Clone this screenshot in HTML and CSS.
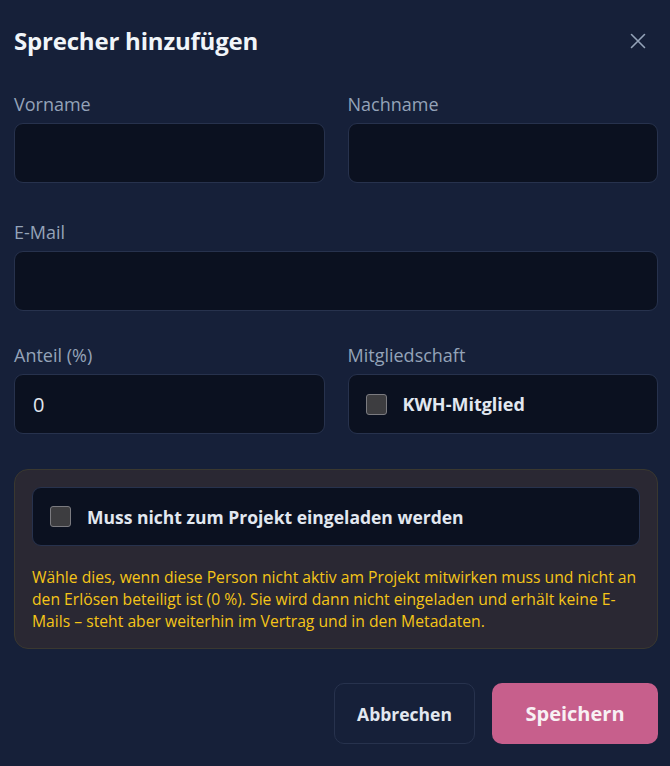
FILE: index.html
```html
<!DOCTYPE html>
<html lang="de">
<head>
    <meta charset="UTF-8">
    <meta name="viewport" content="width=device-width, initial-scale=1.0">
    <title>Sprecher hinzufügen</title>
    <link rel="stylesheet" href="styles.css">
</head>
<body>
  <div class="dialog">
    <div class="dialog-header">
      <h2>Sprecher hinzufügen</h2>
      <button type="button" class="close-btn" aria-label="Schließen">
        <svg width="16" height="16" viewBox="0 0 16 16"><path d="M1.5 1.5 L14.5 14.5 M14.5 1.5 L1.5 14.5" stroke="#94a3b8" stroke-width="1.6" fill="none" stroke-linecap="round"/></svg>
      </button>
    </div>

    <form id="speakerForm">
      <div class="row">
        <div class="field">
          <label for="firstName">Vorname</label>
          <input type="text" id="firstName" name="firstName">
        </div>
        <div class="field">
          <label for="lastName">Nachname</label>
          <input type="text" id="lastName" name="lastName">
        </div>
      </div>

      <div class="field field-email">
        <label for="email">E-Mail</label>
        <input type="email" id="email" name="email">
      </div>

      <div class="row">
        <div class="field">
          <label for="share">Anteil (%)</label>
          <input type="text" id="share" name="share" value="0">
        </div>
        <div class="field">
          <span class="label">Mitgliedschaft</span>
          <label class="check-box">
            <input type="checkbox" name="member">
            <span class="check-text">KWH-Mitglied</span>
          </label>
        </div>
      </div>

      <div class="notice">
        <label class="check-box">
          <input type="checkbox" name="noInvite">
          <span class="check-text">Muss nicht zum Projekt eingeladen werden</span>
        </label>
        <p>Wähle dies, wenn diese Person nicht aktiv am Projekt mitwirken muss und nicht an den Erlösen beteiligt ist (0 %). Sie wird dann nicht eingeladen und erhält keine E-Mails – steht aber weiterhin im Vertrag und in den Metadaten.</p>
      </div>

      <div class="actions">
        <button type="button" class="btn-cancel">Abbrechen</button>
        <button type="button" class="btn-save">Speichern</button>
      </div>
    </form>
  </div>
</body>
</html>
```
FILE: styles.css
```css
body {
    margin: 0;
    background-color: #162039;
    font-family: "Open Sans", "Noto Sans", sans-serif;
    color: #e2e8f0;
}

.dialog {
    padding: 25px 12px 0 14px;
}

.dialog-header {
    display: flex;
    justify-content: space-between;
    align-items: center;
    margin-bottom: 35px;
    height: 32px;
}

.dialog-header h2 {
    margin: 0;
    font-size: 24px;
    line-height: 32px;
    font-weight: 700;
    color: #f1f5f9;
    letter-spacing: -0.2px;
}

.close-btn {
    background: none;
    border: none;
    padding: 0;
    margin-right: 12px;
    cursor: pointer;
    display: flex;
}

.row {
    display: grid;
    grid-template-columns: 1fr 1fr;
    gap: 23px;
}

.field {
    display: flex;
    flex-direction: column;
    margin-bottom: 37px;
}

.field-email {
    margin-bottom: 32px;
}

.field label,
.field .label {
    font-size: 18px;
    color: #94a3b8;
    margin-bottom: 7px;
    line-height: 24px;
}

.field input[type="text"],
.field input[type="email"] {
    height: 60px;
    box-sizing: border-box;
    background-color: #0b1120;
    border: 1px solid #27324d;
    border-radius: 9px;
    padding: 0 18px;
    font-family: inherit;
    font-size: 20px;
    color: #e2e8f0;
}

.check-box {
    display: flex;
    align-items: center;
    gap: 16px;
    height: 60px;
    box-sizing: border-box;
    background-color: #0b1120;
    border: 1px solid #27324d;
    border-radius: 9px;
    padding: 0 17px;
    cursor: pointer;
}

.field .check-box {
    margin-bottom: 0;
}

.check-box input {
    appearance: none;
    width: 21px;
    height: 21px;
    margin: 0;
    background-color: #3d3d40;
    border: 1px solid #7b7b80;
    border-radius: 3px;
}

.check-text {
    font-size: 18px;
    font-weight: 700;
    color: #e2e8f0;
}

.notice .check-text {
    font-size: 17.5px;
}

.notice {
    background-color: #2a2833;
    border: 1px solid #3a3830;
    border-radius: 14px;
    padding: 17px 17px 16px 17px;
    margin-top: -2px;
}

.notice .check-box {
    height: 59px;
}

.notice p {
    margin: 20px 0 0 0;
    font-size: 15.7px;
    line-height: 22px;
    color: #f5c518;
}

.actions {
    display: flex;
    justify-content: flex-end;
    gap: 17px;
    margin-top: 34px;
}

.btn-cancel {
    background: none;
    border: 1px solid #27324d;
    border-radius: 10px;
    height: 61px;
    width: 141px;
    font-family: inherit;
    font-size: 17.5px;
    font-weight: 700;
    color: #e2e8f0;
    cursor: pointer;
}

.btn-save {
    background-color: #c75f8c;
    border: none;
    border-radius: 10px;
    height: 61px;
    width: 166px;
    font-family: inherit;
    font-size: 20px;
    font-weight: 700;
    color: #f8f0f4;
    cursor: pointer;
}
```
